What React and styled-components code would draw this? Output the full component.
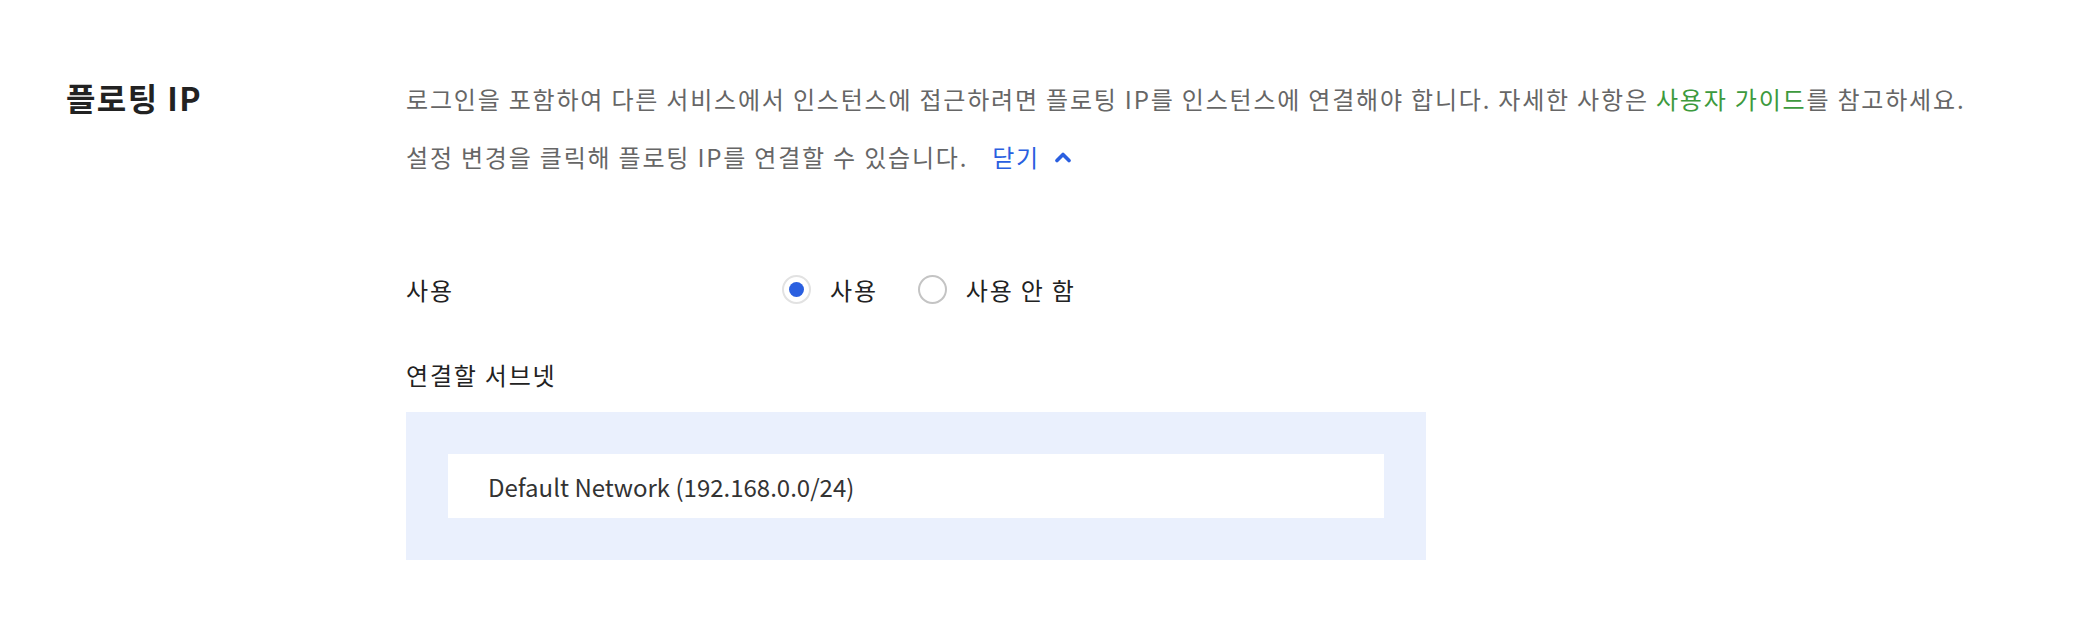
import React, { useState } from 'react';
import styled, { createGlobalStyle } from 'styled-components';

const Global = createGlobalStyle`
  body { margin: 0; background: #fff; font-family: "Noto Sans CJK KR", "Noto Sans", sans-serif; }
`;

const Section = styled.section`
  display: flex;
  padding: 62px 0 0 66px;
`;

const Title = styled.h2`
  width: 340px;
  margin: 0;
  font-size: 32px;
  font-weight: 600;
  letter-spacing: 1.4px;
  line-height: 70px;
  color: #222;
`;

const Body = styled.div`
  flex: 1;
  padding-top: 8px;
`;

const Desc = styled.p`
  margin: 0;
  font-size: 24px;
  letter-spacing: 1.8px;
  line-height: 58px;
  color: #666;
`;

const GuideLink = styled.a`
  color: #3d9a3d;
  text-decoration: none;
`;

const Toggle = styled.a`
  display: inline-flex;
  align-items: center;
  gap: 14px;
  margin-left: 24px;
  color: #2a5fe0;
  text-decoration: none;
  cursor: pointer;
`;

const Form = styled.div`
  display: flex;
  flex-direction: column;
  padding-top: 73px;
`;

const Row = styled.div`
  display: flex;
  align-items: center;
  height: 60px;
  margin-bottom: ${p => p.gap || 0}px;
`;

const Label = styled.div`
  width: 376px;
  font-size: 24px;
  letter-spacing: 1.8px;
  color: #222;
`;

const RadioGroup = styled.div`
  display: flex;
  align-items: center;
  gap: 40px;
`;

const RadioItem = styled.label`
  display: flex;
  align-items: center;
  gap: 19px;
  font-size: 24px;
  letter-spacing: 1.8px;
  color: #222;
  cursor: pointer;
`;

const RadioDot = styled.span`
  box-sizing: border-box;
  width: 29px;
  height: 29px;
  border-radius: 50%;
  border: 2px solid ${p => (p.on ? '#e2e2e2' : '#c4c4c4')};
  background: #fff;
  display: flex;
  align-items: center;
  justify-content: center;
  &::after {
    content: '';
    width: 15px;
    height: 15px;
    border-radius: 50%;
    background: ${p => (p.on ? '#2a5fe0' : 'transparent')};
  }
`;

const SubnetPanel = styled.div`
  width: 1020px;
  box-sizing: border-box;
  padding: 42px;
  background: #eaf0fd;
`;

const SubnetField = styled.div`
  height: 64px;
  display: flex;
  align-items: center;
  padding-left: 40px;
  background: #fff;
  font-size: 24px;
  color: #333;
`;

const Chevron = () => (
  <svg width="18" height="12" viewBox="0 0 18 12">
    <path d="M3 9.5 L9 3.5 L15 9.5" fill="none" stroke="#2a5fe0" strokeWidth="3.6" strokeLinecap="round" strokeLinejoin="round" />
  </svg>
);

export default function App() {
  const [use, setUse] = useState(true);
  return (
    <>
      <Global />
      <Section>
        <Title>플로팅 IP</Title>
        <Body>
          <Desc>
            로그인을 포함하여 다른 서비스에서 인스턴스에 접근하려면 플로팅 IP를 인스턴스에 연결해야 합니다. 자세한 사항은{' '}
            <GuideLink>사용자 가이드</GuideLink>를 참고하세요.
          </Desc>
          <Desc>
            설정 변경을 클릭해 플로팅 IP를 연결할 수 있습니다.
            <Toggle>닫기 <Chevron /></Toggle>
          </Desc>
          <Form>
            <Row gap={25}>
              <Label>사용</Label>
              <RadioGroup>
                <RadioItem onClick={() => setUse(true)}>
                  <RadioDot on={use ? 1 : 0} />사용
                </RadioItem>
                <RadioItem onClick={() => setUse(false)}>
                  <RadioDot on={use ? 0 : 1} />사용 안 함
                </RadioItem>
              </RadioGroup>
            </Row>
            <Row gap={8}>
              <Label>연결할 서브넷</Label>
            </Row>
            <SubnetPanel>
              <SubnetField>Default Network (192.168.0.0/24)</SubnetField>
            </SubnetPanel>
          </Form>
        </Body>
      </Section>
    </>
  );
}
